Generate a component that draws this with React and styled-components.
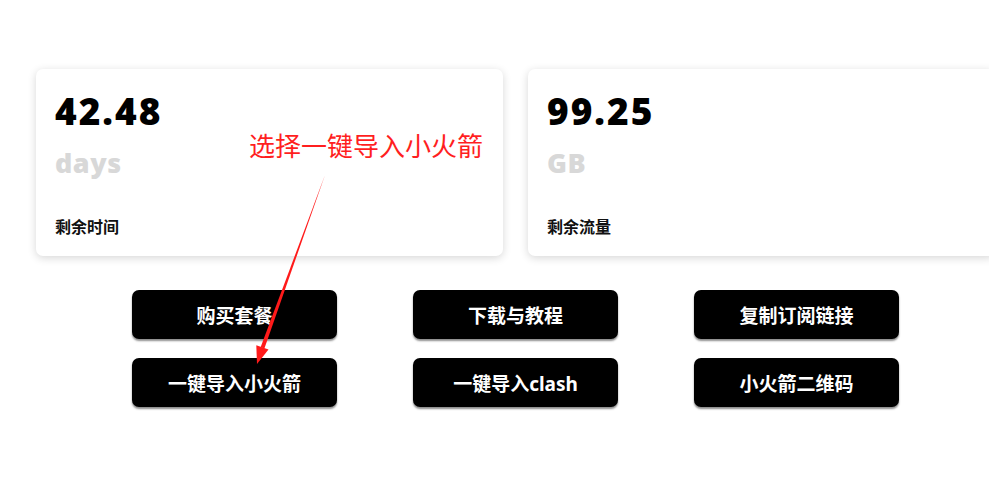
import React from 'react'
import styled, { createGlobalStyle } from 'styled-components'

const stats = [
    { value: '42.48', unit: 'days', label: '剩余时间' },
    { value: '99.25', unit: 'GB', label: '剩余流量' },
]

const actions = ['购买套餐', '下载与教程', '复制订阅链接', '一键导入小火箭', '一键导入clash', '小火箭二维码']

const App = () => {
    return (
        <PageStyle>
            <GlobalStyle />
            <ContainerStyle>
                <CardsStyle>
                    {stats.map((s, i) => (
                        <CardStyle key={i}>
                            <ValueStyle>{s.value}</ValueStyle>
                            <UnitStyle>{s.unit}</UnitStyle>
                            <LabelStyle>{s.label}</LabelStyle>
                        </CardStyle>
                    ))}
                </CardsStyle>
                <ButtonsStyle>
                    {actions.map((a, i) => (
                        <ButtonStyle key={i}>{a}</ButtonStyle>
                    ))}
                </ButtonsStyle>
            </ContainerStyle>
            <NoteStyle>选择一键导入小火箭</NoteStyle>
            <ArrowStyle width="989" height="477" viewBox="0 0 989 477">
                <polygon points="325,175 264.4,348.6 260.6,347.2" fill="#ff1a1a" />
                <polygon points="257,364 268.5,349.5 256.3,345.3" fill="#ff1a1a" />
            </ArrowStyle>
        </PageStyle>
    )
}

//Styled-Components-CSS
const GlobalStyle = createGlobalStyle`
    html, body{
        margin: 0;
        padding: 0;
        background: #fff;
        overflow: hidden;
        font-family: "Noto Sans", "Noto Sans CJK SC", sans-serif;
    }
`;

const PageStyle = styled.div`
    position: relative;
    width: 989px;
    height: 477px;
    overflow: hidden;
`;

const ContainerStyle = styled.div`
    width: 959px;
    margin-left: 36px;
    padding-top: 69px;
`;

const CardsStyle = styled.div`
    display: grid;
    grid-template-columns: 467px 467px;
    column-gap: 25px;
`;

const CardStyle = styled.div`
    height: 187px;
    box-sizing: border-box;
    padding: 20px 19px 0;
    border-radius: 7px;
    background: #fff;
    box-shadow: 0 2px 8px rgba(0, 0, 0, 0.16);
    display: flex;
    flex-direction: column;
`;

const ValueStyle = styled.div`
    font-family: "Open Sans", "Noto Sans", sans-serif;
    font-size: 37px;
    font-weight: 800;
    letter-spacing: 2px;
    line-height: 44px;
    color: #000;
`;

const UnitStyle = styled.div`
    margin-top: 14px;
    font-family: "Open Sans", "Noto Sans", sans-serif;
    font-size: 27px;
    font-weight: 800;
    letter-spacing: 0.5px;
    line-height: 32px;
    color: #d8d8d8;
`;

const LabelStyle = styled.div`
    margin-top: 37px;
    font-size: 16px;
    font-weight: 700;
    line-height: 22px;
    color: #111;
`;

const ButtonsStyle = styled.div`
    margin-top: 34px;
    display: grid;
    grid-template-columns: repeat(3, 205px);
    justify-content: center;
    column-gap: 76px;
    row-gap: 19px;
`;

const ButtonStyle = styled.button`
    height: 49px;
    border: none;
    border-radius: 7px;
    background: #000;
    color: #fff;
    font-family: "Noto Sans", "Noto Sans CJK SC", sans-serif;
    font-size: 19px;
    font-weight: 700;
    box-shadow: 0 2px 2px rgba(0, 0, 0, 0.45);
    padding: 0;
`;

const NoteStyle = styled.div`
    position: absolute;
    left: 249px;
    top: 130px;
    font-family: "Noto Sans CJK SC", sans-serif;
    font-size: 26px;
    line-height: 30px;
    color: #ff1f1f;
`;

const ArrowStyle = styled.svg`
    position: absolute;
    left: 0;
    top: 0;
    pointer-events: none;
`;

export default App
